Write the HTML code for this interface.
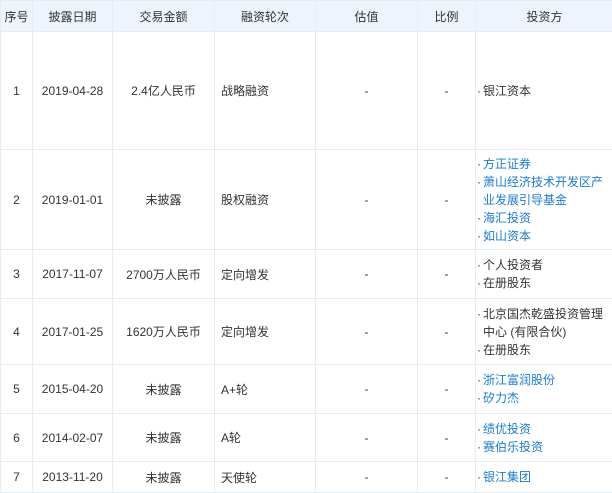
<!DOCTYPE html>
<html><head><meta charset="utf-8"><style>
body{margin:0;width:612px;height:492px;overflow:hidden;background:#fff;font-family:"Liberation Sans","Noto Sans CJK SC",sans-serif;font-size:12px;color:#333}
table{border-collapse:collapse;table-layout:fixed;position:absolute;left:0;top:0;width:613px}
td,th{border:1px solid #e6ecf3;padding:0;text-align:center;font-weight:normal;vertical-align:middle}
th{background:#eef4fb;height:30px}
td.l{text-align:left;padding-left:6px}
td.i{text-align:left;padding-left:1px;line-height:18px}
.b{color:#1a7bd6}
.it{position:relative;padding-left:6px}
.it:before{content:"·";position:absolute;left:0;color:#333}
</style></head><body>
<table>
<colgroup><col style="width:32px"><col style="width:80px"><col style="width:102px"><col style="width:101px"><col style="width:102px"><col style="width:58px"><col style="width:138px"></colgroup>
<tr><th>序号</th><th>披露日期</th><th>交易金额</th><th>融资轮次</th><th>估值</th><th>比例</th><th>投资方</th></tr>
<tr style="height:118px"><td>1</td><td>2019-04-28</td><td>2.4亿人民币</td><td class="l">战略融资</td><td>-</td><td>-</td><td class="i"><div class="it">银江资本</div></td></tr>
<tr style="height:100px"><td>2</td><td>2019-01-01</td><td>未披露</td><td class="l">股权融资</td><td>-</td><td>-</td><td class="i b"><div class="it">方正证券</div><div class="it">萧山经济技术开发区产业发展引导基金</div><div class="it">海汇投资</div><div class="it">如山资本</div></td></tr>
<tr style="height:49px"><td>3</td><td>2017-11-07</td><td>2700万人民币</td><td class="l">定向增发</td><td>-</td><td>-</td><td class="i"><div class="it">个人投资者</div><div class="it">在册股东</div></td></tr>
<tr style="height:66px"><td>4</td><td>2017-01-25</td><td>1620万人民币</td><td class="l">定向增发</td><td>-</td><td>-</td><td class="i"><div class="it">北京国杰乾盛投资管理中心 (有限合伙)</div><div class="it">在册股东</div></td></tr>
<tr style="height:49px"><td>5</td><td>2015-04-20</td><td>未披露</td><td class="l">A+轮</td><td>-</td><td>-</td><td class="i b"><div class="it">浙江富润股份</div><div class="it">矽力杰</div></td></tr>
<tr style="height:48px"><td>6</td><td>2014-02-07</td><td>未披露</td><td class="l">A轮</td><td>-</td><td>-</td><td class="i b"><div class="it">绩优投资</div><div class="it">赛伯乐投资</div></td></tr>
<tr style="height:31px"><td>7</td><td>2013-11-20</td><td>未披露</td><td class="l">天使轮</td><td>-</td><td>-</td><td class="i b"><div class="it">银江集团</div></td></tr>
</table>
</body></html>
